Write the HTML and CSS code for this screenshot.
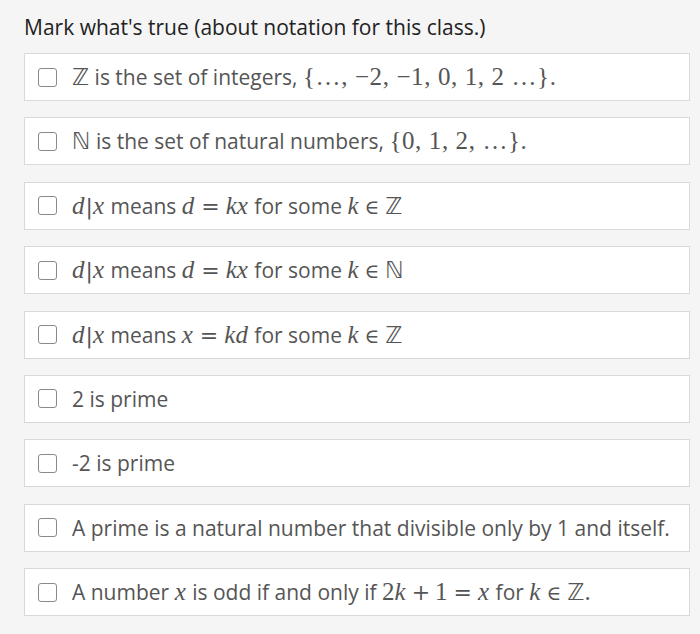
FILE: index.html
```html
<!DOCTYPE html>
<html>
<head>
<meta charset="utf-8">
<link rel="stylesheet" href="styles.css">
</head>
<body>
<div class="page">
  <h1 class="title">Mark what's true (about notation for this class.)</h1>
  <ul class="options">
    <li class="option"><span class="box"></span><span class="label"><span class="m"><span class="bb">ℤ</span></span> is the set of integers, <span class="m set">{…, −2, −1, 0, 1, 2 …}.</span></span></li>
    <li class="option"><span class="box"></span><span class="label"><span class="m"><span class="bb">ℕ</span></span> is the set of natural numbers, <span class="m set">{0, 1, 2, …}.</span></span></li>
    <li class="option"><span class="box"></span><span class="label"><span class="m"><i>d</i><span class="bar">|</span><i>x</i></span> means <span class="m"><i>d</i><span class="rel">=</span><i>kx</i></span> for some <span class="m"><i>k</i><span class="rel in">∈</span><span class="bb">ℤ</span></span></span></li>
    <li class="option"><span class="box"></span><span class="label"><span class="m"><i>d</i><span class="bar">|</span><i>x</i></span> means <span class="m"><i>d</i><span class="rel">=</span><i>kx</i></span> for some <span class="m"><i>k</i><span class="rel in">∈</span><span class="bb">ℕ</span></span></span></li>
    <li class="option"><span class="box"></span><span class="label"><span class="m"><i>d</i><span class="bar">|</span><i>x</i></span> means <span class="m"><i>x</i><span class="rel">=</span><i>kd</i></span> for some <span class="m"><i>k</i><span class="rel in">∈</span><span class="bb">ℤ</span></span></span></li>
    <li class="option"><span class="box"></span><span class="label">2 is prime</span></li>
    <li class="option"><span class="box"></span><span class="label">-2 is prime</span></li>
    <li class="option"><span class="box"></span><span class="label">A prime is a natural number that divisible only by 1 and itself.</span></li>
    <li class="option"><span class="box"></span><span class="label">A number <span class="m"><i>x</i></span> is odd if and only if <span class="m">2<i>k</i><span class="bin">+</span>1<span class="rel">=</span><i>x</i></span> for <span class="m"><i>k</i><span class="rel in">∈</span><span class="bb">ℤ</span>.</span></span></li>
  </ul>
</div>
</body>
</html>
```
FILE: styles.css
```css
html, body {
  margin: 0;
  padding: 0;
  background: #f5f5f5;
}
.page {
  width: 666px;
  padding: 13px 0 0 24px;
  font-family: "Open Sans", "Noto Sans", sans-serif;
}
.title {
  margin: 0 0 12px 0;
  font-size: 21px;
  font-weight: 400;
  line-height: 28px;
  color: #222;
}
.options {
  list-style: none;
  margin: 0;
  padding: 0;
  display: flex;
  flex-direction: column;
  gap: 16.4px;
}
.option {
  height: 46px;
  border: 1px solid #d9d9d9;
  background: #fff;
  display: flex;
  align-items: center;
  padding-left: 13px;
}
.box {
  width: 19px;
  height: 19px;
  box-sizing: border-box;
  border: 1.5px solid #8a8a8a;
  border-radius: 3px;
  flex: none;
  margin-right: 15px;
}
.label {
  font-size: 21px;
  color: #555;
  white-space: nowrap;
}
.m {
  font-family: "Liberation Serif", serif;
  font-size: 25px;
  color: #555;
}
.m.set {
  letter-spacing: 0.6px;
}
.m i {
  font-family: "Liberation Serif", serif;
  font-style: italic;
  padding-right: 1px;
}
.bar {
  font-family: "DejaVu Sans", sans-serif;
  font-size: 22px;
  margin: 0;
}
.rel {
  font-family: "DejaVu Serif", serif;
  font-size: 22px;
  margin: 0 6px;
}
.rel.in {
  font-size: 20px;
  margin: 0 6px 0 5px;
}
.bin {
  font-family: "DejaVu Serif", serif;
  font-size: 22px;
  margin: 0 5px;
}
.bb {
  font-family: "DejaVu Sans", sans-serif;
  font-size: 23px;
}
```
